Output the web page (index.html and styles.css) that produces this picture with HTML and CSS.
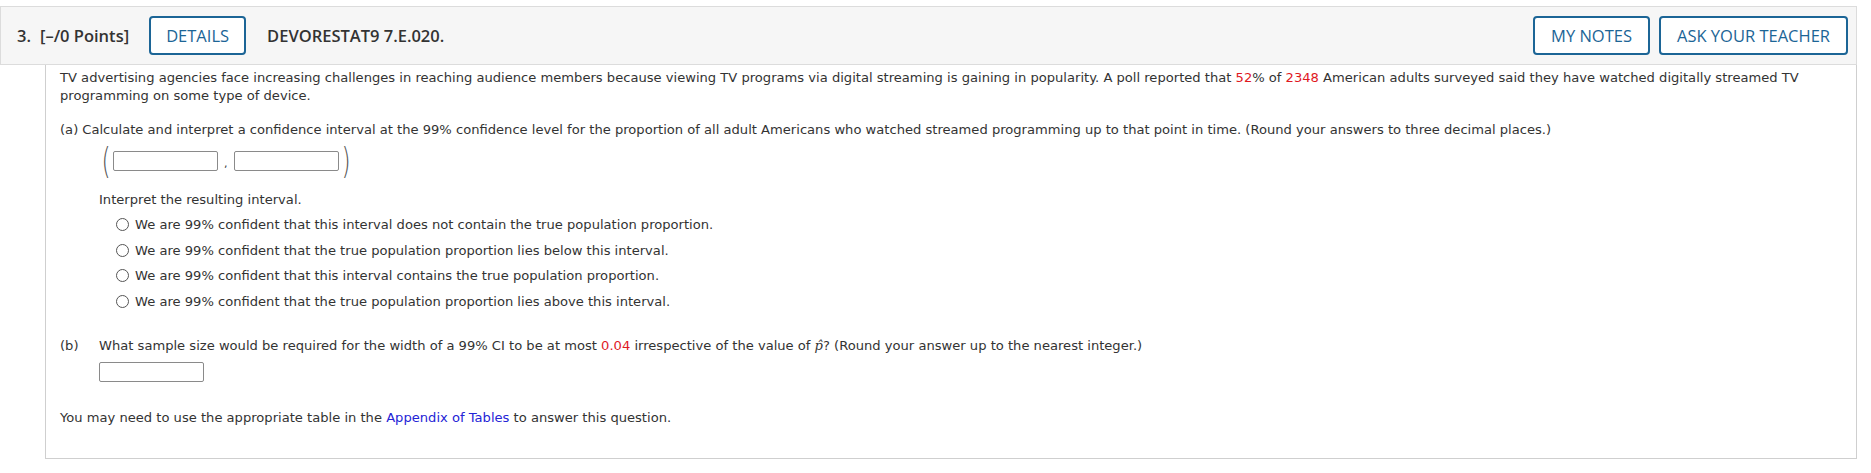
FILE: index.html
```html
<!DOCTYPE html>
<html>
<head>
<meta charset="utf-8">
<link rel="stylesheet" href="styles.css">
</head>
<body>
<div class="question">
  <div class="qhead">
    <span class="qnum">3.</span>
    <span class="points">[–/0 Points]</span>
    <button class="btn btn-details">DETAILS</button>
    <span class="qid">DEVORESTAT9 7.E.020.</span>
    <span class="spacer"></span>
    <button class="btn">MY NOTES</button>
    <button class="btn">ASK YOUR TEACHER</button>
  </div>
  <div class="qbody">
    <p class="intro">TV advertising agencies face increasing challenges in reaching audience members because viewing TV programs via digital streaming is gaining in popularity. A poll reported that <span class="red">52</span>% of <span class="red">2348</span> American adults surveyed said they have watched digitally streamed TV programming on some type of device.</p>

    <div class="part-a">
      <p class="line"><span class="alabel">(a)</span>Calculate and interpret a confidence interval at the 99% confidence level for the proportion of all adult Americans who watched streamed programming up to that point in time. (Round your answers to three decimal places.)</p>
      <div class="pcontent-a">
        <div class="interval">
          <span class="paren">(</span>
          <span class="inbox"></span>
          <span class="comma">,</span>
          <span class="inbox"></span>
          <span class="paren">)</span>
        </div>
        <p class="line interp">Interpret the resulting interval.</p>
        <ul class="choices">
          <li><span class="radio"></span>We are 99% confident that this interval does not contain the true population proportion.</li>
          <li><span class="radio"></span>We are 99% confident that the true population proportion lies below this interval.</li>
          <li><span class="radio"></span>We are 99% confident that this interval contains the true population proportion.</li>
          <li><span class="radio"></span>We are 99% confident that the true population proportion lies above this interval.</li>
        </ul>
      </div>
    </div>

    <div class="part part-b">
      <span class="plabel">(b)</span>
      <div class="pcontent">
        <p class="line">What sample size would be required for the width of a 99% CI to be at most <span class="red">0.04</span> irrespective of the value of <span class="phat">p̂</span>? (Round your answer up to the nearest integer.)</p>
        <span class="inbox inbox-b"></span>
      </div>
    </div>

    <p class="line footer">You may need to use the appropriate table in the <a class="link">Appendix of Tables</a> to answer this question.</p>
  </div>
</div>
</body>
</html>
```
FILE: styles.css
```css
html, body {
  margin: 0;
  padding: 0;
  background: #ffffff;
}

.question {
  width: 1857px;
  margin-top: 6px;
}

.qhead {
  display: flex;
  align-items: center;
  height: 57px;
  background: #f6f6f6;
  border: 1px solid #dcdcdc;
  padding: 0 8px 0 16px;
  font-family: "Open Sans", "Liberation Sans", sans-serif;
  font-size: 16.5px;
  font-weight: 600;
  color: #333333;
  box-sizing: content-box;
}

.qnum {
  margin-right: 9px;
}

.points {
  margin-right: 20px;
}

.qid {
  margin-left: 21px;
}

.spacer {
  flex: 1;
}

.btn {
  height: 39px;
  box-sizing: border-box;
  border: 2px solid #1c6596;
  border-radius: 4px;
  background: #ffffff;
  color: #1c6596;
  font-family: "Open Sans", "Liberation Sans", sans-serif;
  font-size: 16.5px;
  font-weight: 500;
  padding: 0 16px;
  margin-left: 9px;
}

.btn-details {
  margin-left: 0;
  width: 97px;
  padding: 0;
}

.qbody {
  margin-left: 45px;
  border: 1px solid #cfcfcf;
  border-top: none;
  padding: 4px 15px 31px 14px;
  font-family: "DejaVu Sans", Verdana, sans-serif;
  font-size: 13.1px;
  line-height: 19px;
  color: #333333;
}

.intro {
  margin: 0;
  line-height: 18px;
}

.red {
  color: #e0191f;
}

.part-a {
  margin-top: 15px;
}

.alabel {
  margin-right: 4px;
}

.pcontent-a {
  padding-left: 39px;
}

.part {
  display: flex;
}

.plabel {
  width: 39px;
  flex: none;
}

.pcontent {
  flex: 1;
}

.line {
  margin: 0;
}

.interval {
  display: flex;
  align-items: center;
  height: 32px;
  margin-top: 6px;
}

.paren {
  font-family: "DejaVu Sans", sans-serif;
  font-weight: 200;
  font-size: 36px;
  line-height: 32px;
  color: #555555;
  transform: scaleX(0.65);
}

.comma {
  margin: 4px 6px 0 6px;
  font-size: 11px;
}

.inbox {
  display: inline-block;
  width: 105px;
  height: 20px;
  box-sizing: border-box;
  border: 1px solid #8a8a8a;
  border-radius: 2px;
  background: #ffffff;
}

.interval .inbox:first-of-type {
  margin-left: 2px;
}

.interp {
  margin-top: 13px;
}

.choices {
  list-style: none;
  margin: 6px 0 0 0;
  padding: 0 0 0 17px;
  display: flex;
  flex-direction: column;
  gap: 6.5px;
}

.choices li {
  display: flex;
  align-items: center;
}

.radio {
  width: 13px;
  height: 13px;
  box-sizing: border-box;
  border: 1px solid #555555;
  border-radius: 50%;
  background: #ffffff;
  margin-right: 6px;
  flex: none;
}

.part-b {
  margin-top: 25px;
}

.inbox-b {
  display: block;
  margin-top: 7px;
}

.phat {
  font-family: "DejaVu Serif", serif;
  font-style: italic;
}

.footer {
  margin-top: 26px;
}

.link {
  color: #2424d6;
  text-decoration: none;
}
```
